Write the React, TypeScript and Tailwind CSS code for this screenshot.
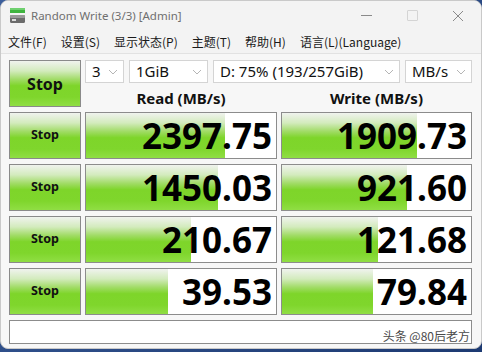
import React from 'react';

const rows = [
  { r: '2397.75', rb: 139, w: '1909.73', wb: 135 },
  { r: '1450.03', rb: 132, w: '921.60', wb: 125 },
  { r: '210.67', rb: 105, w: '121.68', wb: 96 },
  { r: '39.53', rb: 82, w: '79.84', wb: 91 },
];

const green =
  'bg-[linear-gradient(to_bottom,#f0f3ee_0%,#d3ebbd_22%,#a3dc6a_40%,#7ed52a_55%,#7fd62c_80%,#90de44_100%)]';

function StopButton({ big }: { big?: boolean }) {
  return (
    <div
      className={`flex items-center justify-center border border-[#8a8a8a] ${green} text-[#111] font-bold ${
        big ? 'text-[16px]' : 'text-[12.5px]'
      }`}
    >
      Stop
    </div>
  );
}

function Cell({ value, bar }: { value: string; bar: number }) {
  return (
    <div className="relative flex items-center justify-end overflow-hidden border border-[#8c8c8c] bg-white pr-[4px]">
      <div className={`absolute left-0 top-0 bottom-0 ${green}`} style={{ width: bar }} />
      <span className="relative text-[35px] font-bold leading-none tracking-[0px] text-black">{value}</span>
    </div>
  );
}

function Chevron() {
  return (
    <svg width="10" height="6" viewBox="0 0 10 6" className="shrink-0">
      <path d="M1 1 L5 5 L9 1" fill="none" stroke="#b5b5b5" strokeWidth="1" />
    </svg>
  );
}

function Combo({ text, w }: { text: string; w: string }) {
  return (
    <div className={`flex h-[23px] items-center justify-between border border-[#d4d4d4] bg-white pl-[6px] pr-[5px] ${w}`}>
      <span className="text-[15px] leading-none text-[#111]">{text}</span>
      <Chevron />
    </div>
  );
}

export default function App() {
  return (
    <div
      className="h-[352px] w-[482px] overflow-hidden bg-[linear-gradient(135deg,#3c5f9c,#1d3a72)]"
      style={{ fontFamily: '"Noto Sans", "Noto Sans CJK SC", sans-serif' }}
    >
      <div className="flex h-[349px] w-[482px] flex-col overflow-hidden rounded-[8px] border border-[#c9c9c9] bg-[#f7f7f7]">
        {/* title bar */}
        <div className="flex h-[29px] shrink-0 items-center bg-[#f3f3f3] pl-[8px]">
          <svg width="17" height="17" viewBox="0 0 17 17" className="mr-[5px]">
            <rect x="1" y="1" width="15" height="5" fill="#3fb43f" />
            <rect x="1" y="1" width="15" height="2" fill="#6fd06f" />
            <rect x="1" y="8" width="15" height="8" rx="1.5" fill="#6c6c6c" />
            <rect x="1" y="8" width="15" height="3" rx="1" fill="#9a9a9a" />
            <rect x="3" y="12" width="4" height="2" fill="#dcdcdc" />
          </svg>
          <span className="text-[11.5px] text-[#6f6f6f]">Random Write (3/3) [Admin]</span>
          <div className="ml-auto flex h-full items-center">
            <div className="flex w-[46px] justify-center">
              <div className="h-[1px] w-[11px] bg-[#8a8a8a]" />
            </div>
            <div className="flex w-[46px] justify-center">
              <div className="h-[11px] w-[11px] rounded-[1px] border border-[#d4d4d4]" />
            </div>
            <div className="flex w-[46px] justify-center">
              <svg width="12" height="12" viewBox="0 0 12 12">
                <path d="M1 1 L11 11 M11 1 L1 11" stroke="#8a8a8a" strokeWidth="1" />
              </svg>
            </div>
          </div>
        </div>
        {/* menu */}
        <div
          className="flex h-[23px] shrink-0 items-center gap-[14px] bg-[#f3f3f3] pl-[7px] text-[12px] text-[#1a1a1a]"
          style={{ fontFamily: '"Noto Sans CJK SC", "Noto Sans", sans-serif' }}
        >
          <span>文件(F)</span>
          <span>设置(S)</span>
          <span>显示状态(P)</span>
          <span>主题(T)</span>
          <span>帮助(H)</span>
          <span>语言(L)(Language)</span>
        </div>
        {/* client */}
        <div className="flex-1 border-t border-[#e2e2e2] px-[8px] pt-[6px]">
          <div className="grid grid-cols-[72px_192px_191px] grid-rows-[47px_47px_47px_47px_47px_24px] gap-x-[4px] gap-y-[5px]">
            <StopButton big />
            <div className="col-span-2 flex flex-col">
              <div className="flex gap-[5px]">
                <Combo text="3" w="w-[39px]" />
                <Combo text="1GiB" w="w-[79px]" />
                <Combo text="D: 75% (193/257GiB)" w="w-[187px]" />
                <Combo text="MB/s" w="w-[67px]" />
              </div>
              <div className="grid flex-1 grid-cols-[192px_191px] gap-x-[4px]">
                <div className="flex items-end justify-center pb-[1px] text-[15px] font-bold leading-none text-[#111]">
                  Read (MB/s)
                </div>
                <div className="flex items-end justify-center pb-[1px] text-[15px] font-bold leading-none text-[#111]">
                  Write (MB/s)
                </div>
              </div>
            </div>
            {rows.map((row, i) => (
              <React.Fragment key={i}>
                <StopButton />
                <Cell value={row.r} bar={row.rb} />
                <Cell value={row.w} bar={row.wb} />
              </React.Fragment>
            ))}
            <div className="col-span-3 flex items-end justify-end border border-[#8c8c8c] bg-white pb-[1px] pr-[1px]">
              <span
                className="text-[12px] leading-none text-[#4a4a4a]"
                style={{ fontFamily: '"Noto Sans CJK SC", sans-serif' }}
              >
                头条 @80后老方
              </span>
            </div>
          </div>
        </div>
      </div>
    </div>
  );
}
